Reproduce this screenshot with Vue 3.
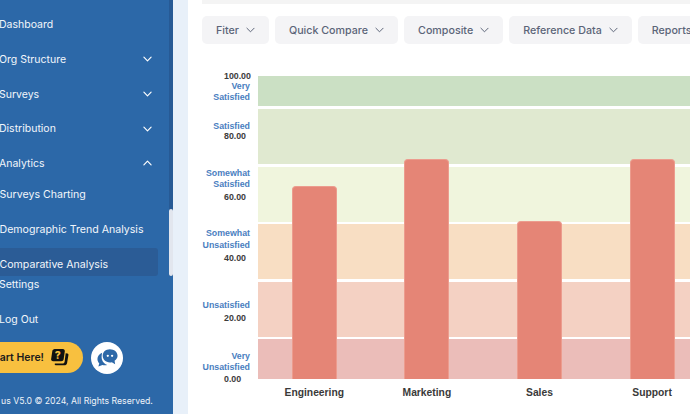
<script setup>
const nav = [
  { label: 'Dashboard' },
  { label: 'Org Structure', chev: 'down' },
  { label: 'Surveys', chev: 'down' },
  { label: 'Distribution', chev: 'down' },
  { label: 'Analytics', chev: 'up' },
  { label: 'Surveys Charting', cls: 'sub first' },
  { label: 'Demographic Trend Analysis', cls: 'sub demo' },
  { label: 'Comparative Analysis', cls: 'sub active' },
  { label: 'Settings', cls: 'after' },
  { label: 'Log Out', cls: 'logout' }
]
const filters = ['Fiter', 'Quick Compare', 'Composite', 'Reference Data', 'Reports']
const bands = [
  { c: '#cbe0c4', h: 30 },
  { c: '#e0e9d0', h: 55 },
  { c: '#f0f5dd', h: 55 },
  { c: '#f8dec3', h: 55 },
  { c: '#f4d1c3', h: 54.5 },
  { c: '#ebbdb9', h: 40 }
]
const bars = [
  { name: 'Engineering', v: 63.7 },
  { name: 'Marketing', v: 72.6 },
  { name: 'Sales', v: 52.1 },
  { name: 'Support', v: 72.6 }
]
const axis = [
  { t: '100.00', y: 76, n: 1 }, { t: 'Very', y: 86 }, { t: 'Satisfied', y: 97 },
  { t: 'Satisfied', y: 126 }, { t: '80.00', y: 136, n: 1 },
  { t: 'Somewhat', y: 173 }, { t: 'Satisfied', y: 184 }, { t: '60.00', y: 197, n: 1 },
  { t: 'Somewhat', y: 233 }, { t: 'Unsatisfied', y: 245 }, { t: '40.00', y: 258, n: 1 },
  { t: 'Unsatisfied', y: 305 }, { t: '20.00', y: 318, n: 1 },
  { t: 'Very', y: 356 }, { t: 'Unsatisfied', y: 367 }, { t: '0.00', y: 379, n: 1 }
]
</script>

<template>
  <div class="page">
    <aside class="side">
      <nav class="nav">
        <a v-for="i in nav" :key="i.label" class="item" :class="i.cls">
          <span>{{ i.label }}</span>
          <svg v-if="i.chev" class="chev" :class="i.chev" viewBox="0 0 10 6" width="9" height="6">
            <path d="M1 1l4 4 4-4" fill="none" stroke="#fff" stroke-width="1.3" stroke-linecap="round" stroke-linejoin="round" />
          </svg>
        </a>
      </nav>
      <div class="actions">
        <div class="pill">
          <span>Start Here!</span>
          <svg viewBox="0 0 20 20" width="19" height="19">
            <path d="M16.500 5.500l1.900.3c.7.1 1.100.8 1 1.500l-1.400 8.400c-.3 1.500-1.400 2.500-2.900 2.500H6c-1 0-1.400-1.100-.8-1.800h8c1.200 0 2-.7 2.200-1.900z" fill="#111" />
            <path d="M5 1h8.500c1.400 0 2.300 1.100 2.100 2.400l-1.200 8.200c-.2 1.400-1.200 2.400-2.600 2.400H3.300C1.900 14 1 12.900 1.200 11.600L2.400 3.400C2.600 2 3.600 1 5 1z" fill="#111" />
            <text x="8.300" y="11.700" text-anchor="middle" class="q">?</text>
          </svg>
        </div>
        <div class="chat">
          <svg viewBox="0 0 24 24" width="23" height="23">
            <path d="M6.500 7C3.500 8.200 1.500 10.700 1.500 13.600c0 1.700.7 3.300 1.900 4.500L2.500 21.500l4.200-1.800c1.600.5 3.400.5 5 .1C9.500 19.300 7 17.300 6.200 14.200 5.700 11.800 5.800 9.300 6.500 7z" fill="#2c68a8" />
            <path d="M14.500 3.500c-4.400 0-7.500 2.900-7.500 6.800s3.100 6.800 7.500 6.800c.7 0 1.400-.1 2-.2l3.500 2.100-.6-3.600c1.900-1.200 3.100-3 3.100-5.100 0-3.900-3.600-6.800-8-6.800z" fill="#2c68a8" />
            <circle cx="12.300" cy="10.300" r="1.200" fill="#fff" />
            <circle cx="16.800" cy="10.300" r="1.200" fill="#fff" />
          </svg>
        </div>
      </div>
      <p class="foot">us V5.0 © 2024, All Rights Reserved.</p>
      <div class="track"><div class="thumb"></div></div>
    </aside>
    <div class="gutter"></div>
    <main class="main">
      <div class="topline"></div>
      <div class="filters">
        <button v-for="f in filters" :key="f" class="fbtn">
          <span>{{ f }}</span>
          <svg viewBox="0 0 10 6" width="9" height="6">
            <path d="M1 1l4 4 4-4" fill="none" stroke="#5b6478" stroke-width="1.100" stroke-linecap="round" stroke-linejoin="round" />
          </svg>
        </button>
      </div>
      <div class="chart">
        <span v-for="(a, i) in axis" :key="i" class="tick" :class="{ num: a.n }" :style="{ top: a.y - 76 + 'px' }">{{ a.t }}</span>
        <div class="plot">
          <div v-for="b in bands" :key="b.c" class="band" :style="{ background: b.c, height: b.h + 'px' }"></div>
          <div class="bars">
            <div v-for="b in bars" :key="b.name" class="slot">
              <div class="bar" :style="{ height: b.v + '%' }"></div>
            </div>
          </div>
        </div>
        <div class="names">
          <span v-for="b in bars" :key="b.name">{{ b.name }}</span>
        </div>
      </div>
    </main>
  </div>
</template>

<style>
html, body { margin: 0; overflow: hidden; background: #fff; }
</style>

<style scoped>
.page { width: 690px; height: 414px; display: flex; overflow: hidden; font-family: "Inter", "Noto Sans", sans-serif; }
.side { width: 173px; flex: none; background: #2c68a8; color: #fff; position: relative; overflow: hidden; }
.nav { display: flex; flex-direction: column; padding-top: 7.300px; }
.item { flex: none; height: 34.700px; display: flex; align-items: center; justify-content: space-between; margin-left: -1px; padding-right: 21px; font-size: 10.500px; color: #f2f6fb; box-sizing: border-box; width: 174px; }
.chev.up { transform: rotate(180deg); }
.item.sub { margin-left: -0.500px; font-size: 10.600px; }
.item.first { height: 27px; padding-top: 1px; }
.item.demo { margin-top: 4px; }
.item.active { width: 158.500px; height: 28px; margin-top: 2px; padding-top: 4px; background: #2b5c96; border-radius: 0 3px 3px 0; }
.item.after { height: 20px; margin-top: -2px; }
.item.logout { margin-top: 7.500px; }
.actions { display: flex; align-items: center; gap: 8px; margin-top: 5.300px; }
.pill { width: 103px; height: 31px; margin-left: -20px; flex: none; background: #f8c03f; border-radius: 0 16px 16px 0; display: flex; align-items: center; gap: 6px; box-sizing: border-box; justify-content: flex-end; padding-right: 14px; color: #1b1b1b; font-size: 10.500px; font-weight: 600; }
.q { font: 800 11px "Inter", sans-serif; fill: #f8c03f; }
.chat { width: 32px; height: 32px; border-radius: 50%; background: #fff; display: flex; align-items: center; justify-content: center; }
.foot { margin: 21px 0 0 1px; font-size: 8.700px; color: #eef3f9; white-space: nowrap; line-height: 12px; }
.track { position: absolute; right: 0; top: 0; width: 4px; height: 276px; background: #275a95; }
.thumb { position: absolute; top: 209px; bottom: 0; left: 0; right: 0; background: #e2e6ee; border-radius: 2px; }
.gutter { width: 15px; flex: none; background: #e8f0f9; }
.main { flex: 1; min-width: 0; padding-left: 14px; }
.topline { height: 4px; background: #f4f4f4; width: 600px; }
.filters { display: flex; gap: 6px; margin-top: 12px; width: 600px; }
.fbtn { flex: none; height: 28px; padding: 0 14px; border: 0; border-radius: 5px; background: #f4f4f6; color: #5b6478; font: 500 10.700px "Inter", sans-serif; display: flex; align-items: center; gap: 7px; }
.chart { position: relative; margin-top: 32px; margin-left: 56px; width: 450px; }
.tick { position: absolute; right: 458px; transform: translateY(-50%); white-space: nowrap; font: 700 8.800px "Liberation Sans", sans-serif; color: #4a80bf; }
.tick.num { color: #3c3c3c; right: auto; left: -34px; }
.plot { position: relative; display: flex; flex-direction: column; gap: 2.800px; height: 303px; overflow: hidden; }
.band { flex: none; }
.bars { position: absolute; inset: 0; display: grid; grid-template-columns: repeat(4, 112.600px); }
.slot { display: flex; align-items: flex-end; justify-content: center; }
.bar { width: 45px; background: #e58576; border: 1px solid #ec9c8e; border-bottom: 0; border-radius: 4px 4px 0 0; box-sizing: border-box; }
.names { display: grid; grid-template-columns: repeat(4, 112.600px); margin-top: 8px; font: 700 10.300px "Liberation Sans", sans-serif; color: #3a3a3a; text-align: center; }
</style>
